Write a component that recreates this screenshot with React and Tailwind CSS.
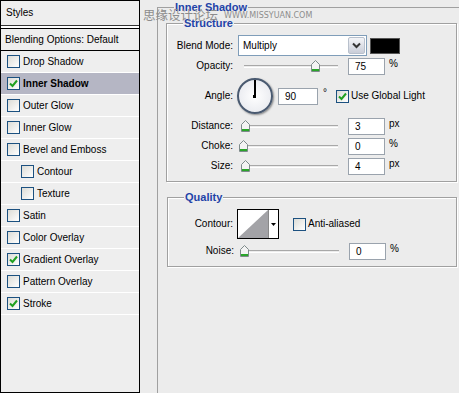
import React from 'react';

const styles = [
  { name: 'Drop Shadow' },
  { name: 'Inner Shadow', checked: true, active: true },
  { name: 'Outer Glow' },
  { name: 'Inner Glow' },
  { name: 'Bevel and Emboss' },
  { name: 'Contour', indent: true },
  { name: 'Texture', indent: true },
  { name: 'Satin' },
  { name: 'Color Overlay' },
  { name: 'Gradient Overlay', checked: true },
  { name: 'Pattern Overlay' },
  { name: 'Stroke', checked: true },
];

function Check({ checked }) {
  return (
    <span className="flex h-[13px] w-[13px] shrink-0 items-center justify-center border border-[#1c5180] bg-linear-to-br from-[#dcdcd6] to-white">
      {checked && (
        <svg width="9" height="9" viewBox="0 0 9 9">
          <path d="M1 4.5 L3.5 7 L8 1.5" stroke="#21a121" strokeWidth="2" fill="none" />
        </svg>
      )}
    </span>
  );
}

function Slider({ pos }) {
  return (
    <div className="relative h-[12px] w-[97px] shrink-0">
      <div className="absolute left-[3px] right-0 top-[5px] h-[3px] border-t border-b border-t-[#a8a8a8] border-b-white" />
      <svg className="absolute top-0" style={{ left: pos }} width="9" height="12" viewBox="0 0 9 12">
        <path d="M0.5 4.5 L4.5 0.5 L8.5 4.5 L8.5 11.5 L0.5 11.5 Z" fill="#f3f3f3" stroke="#7d8a8a" />
        <rect x="1" y="9" width="7" height="2" fill="#2aa52a" />
      </svg>
    </div>
  );
}

function Field({ value, w = 'w-[37px]' }) {
  return (
    <div className={`${w} flex h-[17px] shrink-0 items-center border border-[#9aa3ad] bg-white pl-[6px] pt-[1px]`}>
      {value}
    </div>
  );
}

function SliderRow({ label, pos, value, unit }) {
  return (
    <div className="flex h-[20px] items-center">
      <div className="w-[66px] shrink-0 text-right">{label}</div>
      <div className="ml-[8px]">
        <Slider pos={pos} />
      </div>
      <div className="ml-[10px]">
        <Field value={value} />
      </div>
      <span className="ml-[4px] -mt-[4px]">{unit}</span>
    </div>
  );
}

function Group({ title, className, children }) {
  return (
    <div className={`relative border border-[#a0a0a0] shadow-[inset_1px_1px_0_#fff,1px_1px_0_#fff] ${className}`}>
      <span className="absolute left-[16px] top-[-7px] bg-[#ececec] px-[1px] text-[11px] font-bold leading-[13px] text-[#1f43a8]">
        {title}
      </span>
      {children}
    </div>
  );
}

export default function App() {
  return (
    <div className="relative flex h-[393px] w-[459px] overflow-hidden bg-[#ececec] font-['Tahoma','Liberation_Sans',sans-serif] text-[10px] leading-[12px] text-black">
      {/* styles list */}
      <div className="flex h-[393px] w-[140px] shrink-0 flex-col border border-black bg-[#eeeeee]">
        <div className="flex h-[25px] items-center border-b border-[#333] pl-[5px]">Styles</div>
        <div className="h-[2px] bg-white" />
        <div className="flex h-[23px] items-center border-t border-b border-black pl-[4px]">Blending Options: Default</div>
        {styles.map((s) => (
          <div
            key={s.name}
            className={`flex h-[22px] items-center border-b border-white ${s.indent ? 'pl-[20px]' : 'pl-[6px]'} ${s.active ? 'bg-[#b5b6c4] font-bold' : ''}`}
          >
            <Check checked={s.checked} />
            <span className="ml-[3px]">{s.name}</span>
          </div>
        ))}
      </div>

      {/* options */}
      <div className="ml-[17px] mt-[7px] flex-1">
        <div className="relative h-[400px] border-l border-t border-[#a0a0a0] pl-[8px] pt-[15px]">
          <span className="absolute left-[16px] top-[-7px] bg-[#ececec] px-[1px] text-[11px] font-bold leading-[13px] text-[#1f43a8]">
            Inner Shadow
          </span>

          <Group title="Structure" className="w-[291px] pb-[5px] pt-[11px]">
            <div className="flex h-[21px] items-center">
              <div className="w-[66px] shrink-0 text-right">Blend Mode:</div>
              <div className="ml-[5px] flex h-[21px] w-[129px] items-center justify-between border border-[#7f9db9] bg-white pl-[4px] pr-[1px]">
                <span>Multiply</span>
                <span className="flex h-[17px] w-[17px] items-center justify-center rounded-[2px] border border-[#b8c0cc] bg-linear-to-b from-[#f4f5f8] to-[#c9cdd8]">
                  <svg width="9" height="7" viewBox="0 0 9 7">
                    <path d="M1 1.5 L4.5 5 L8 1.5" stroke="#333" strokeWidth="2" fill="none" />
                  </svg>
                </span>
              </div>
              <div className="ml-[3px] h-[16px] w-[30px] border border-[#555] bg-black" />
            </div>

            <SliderRow label="Opacity:" pos={70} value="75" unit="%" />

            <div className="flex h-[40px] items-center">
              <div className="w-[66px] shrink-0 text-right">Angle:</div>
              <div className="relative ml-[4px] h-[36px] w-[36px] shrink-0 rounded-full border-2 border-[#4a5a70] bg-radial from-white to-[#e4e6ec] shadow-[1px_1px_2px_#888]">
                <span className="absolute left-[15px] top-0 h-[16px] w-[2px] bg-black" />
                <span className="absolute left-[14px] top-[15px] h-[3px] w-[3px] bg-black" />
              </div>
              <div className="ml-[5px]">
                <Field value="90" w="w-[40px]" />
              </div>
              <span className="ml-[5px] -mt-[6px] text-[10px]">°</span>
              <div className="ml-[9px] flex items-center">
                <Check checked />
                <span className="ml-[2px]">Use Global Light</span>
              </div>
            </div>

            <SliderRow label="Distance:" pos={0} value="3" unit="px" />
            <SliderRow label="Choke:" pos={-2} value="0" unit="%" />
            <SliderRow label="Size:" pos={0} value="4" unit="px" />
          </Group>

          <Group title="Quality" className="ml-[1px] mt-[15px] w-[290px] pb-[5px] pt-[11px]">
            <div className="flex h-[30px] items-center">
              <div className="w-[65px] shrink-0 text-right">Contour:</div>
              <div className="ml-[4px] flex h-[30px] w-[42px] border border-black bg-white">
                <svg width="30" height="28" viewBox="0 0 30 28" className="shrink-0">
                  <path d="M0 28 L30 0 L30 28 Z" fill="#a3a3a7" />
                </svg>
                <div className="flex flex-1 items-center justify-center border-l border-[#888]">
                  <svg width="5" height="3" viewBox="0 0 5 3">
                    <path d="M0 0 L5 0 L2.5 3 Z" fill="#000" />
                  </svg>
                </div>
              </div>
              <div className="ml-[14px] flex items-center">
                <Check />
                <span className="ml-[2px]">Anti-aliased</span>
              </div>
            </div>
            <div className="mt-[2px]">
              <SliderRow label="Noise:" pos={-2} value="0" unit="%" />
            </div>
          </Group>
        </div>
      </div>

      {/* watermark */}
      <div className="absolute left-[143px] top-[8px] flex items-end text-[#8c8c8c]">
        <span className="font-['Noto_Sans_CJK_SC',sans-serif] text-[12.5px] leading-[13px]">思缘设计论坛</span>
        <span className="ml-[6px] font-['DejaVu_Sans',sans-serif] text-[8px] leading-[10px]">WWW.MISSYUAN.COM</span>
      </div>
    </div>
  );
}
